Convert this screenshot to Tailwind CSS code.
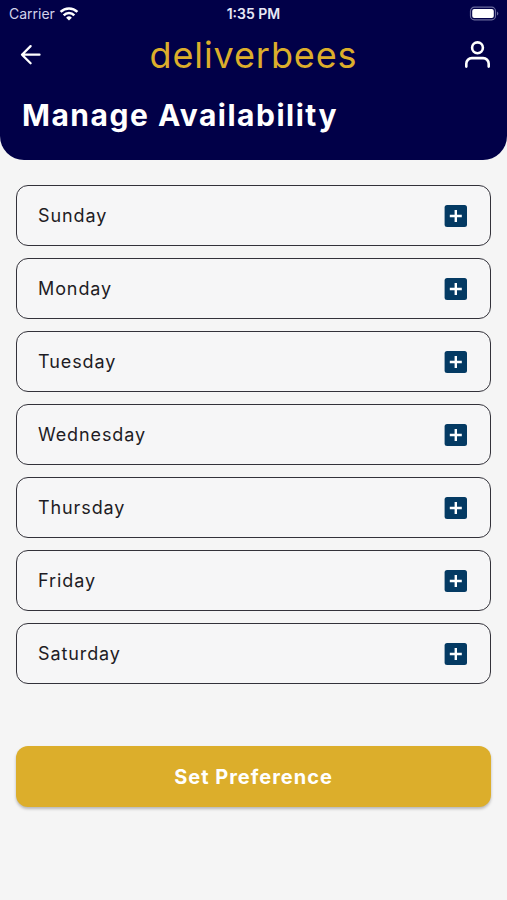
<!DOCTYPE html>
<html lang="en">
<head>
    <meta charset="UTF-8">
    <meta name="viewport" content="width=device-width, initial-scale=1.0">
    <title>Manage Availability - deliverbees</title>
    <script src="https://cdn.jsdelivr.net/npm/@tailwindcss/browser@4"></script>
</head>
<body class="min-h-screen bg-[#f5f5f5] font-['Inter',sans-serif] text-[#1e1c24]">

    <header class="bg-[#010048] rounded-b-3xl text-white pb-[27px]">
        <!-- Status bar -->
        <div class="grid grid-cols-3 items-center h-7 px-2 text-sm leading-7">
            <div class="flex items-center gap-1 pl-px text-[#d3d3ea]">
                <span>Carrier</span>
                <svg class="w-5 h-4" viewBox="0 0 20 16" fill="none" stroke="#fff" stroke-width="2.6">
                    <path d="M1.6 5.9a12 12 0 0 1 16.8 0"/>
                    <path d="M4.7 9.3a7.4 7.4 0 0 1 10.6 0"/>
                    <path d="M10 14.6l-2.9-2.9a4.1 4.1 0 0 1 5.8 0z" fill="#fff" stroke="none"/>
                </svg>
            </div>
            <span class="text-center font-semibold text-[#e8e8f6]">1:35 PM</span>
            <svg class="w-8 h-4 justify-self-end" viewBox="0 0 32 16">
                <rect x="3.5" y="1.2" width="25" height="12.6" rx="3.8" fill="none" stroke="#6a6a9c" stroke-width="1.2"/>
                <rect x="5.2" y="2.9" width="21.6" height="9.2" rx="2" fill="#fff"/>
                <path d="M30 5.4c1.8.8 1.8 3.4 0 4.2z" fill="#6a6a9c"/>
            </svg>
        </div>

        <!-- Nav row -->
        <div class="flex items-center justify-between px-4 h-[54px]">
            <a href="#" aria-label="Back">
                <svg class="w-7 h-7" viewBox="0 0 28 28" fill="none" stroke="#fff" stroke-width="2.3" stroke-linecap="round" stroke-linejoin="round">
                    <path d="M23.5 13.7H6M14.6 5.1L6 13.7l8.6 8.6"/>
                </svg>
            </a>
            <span class="text-4xl tracking-wide text-[#dcae2b]">deliverbees</span>
            <a href="#" aria-label="Profile">
                <svg class="w-7 h-7" viewBox="0 0 28 28" fill="none" stroke="#fff" stroke-width="2.6" stroke-linecap="round">
                    <circle cx="14.5" cy="6.8" r="5.4"/>
                    <path d="M3.3 25.6v-2.9a5.6 5.6 0 0 1 5.6-5.6h11.2a5.6 5.6 0 0 1 5.6 5.6v2.9"/>
                </svg>
            </a>
        </div>

        <h1 class="px-[22px] pt-[15px] text-3xl leading-9 font-bold tracking-wider">Manage Availability</h1>
    </header>

    <main class="px-4 pt-[25px]">
        <ul id="days" class="flex flex-col gap-3"></ul>

        <button type="button" class="w-full mt-[62px] min-h-[61px] rounded-xl bg-[#dcae2b] text-xl font-bold tracking-wider text-white shadow-[0_2px_3px_rgba(0,0,0,0.25)]">
            Set Preference
        </button>
    </main>

    <script>
        var days = ["Sunday", "Monday", "Tuesday", "Wednesday", "Thursday", "Friday", "Saturday"];
        document.getElementById("days").innerHTML = days.map(function (day) {
            return `
            <li class="flex items-center justify-between min-h-[61px] px-5 border border-[#33323a] rounded-xl bg-[#f6f6f7]">
                <span class="pl-px text-lg tracking-wider">${day}</span>
                <button type="button" aria-label="Add ${day}">
                    <svg class="w-7 h-7" viewBox="0 0 28 28">
                        <rect x="2.6" y="3" width="22.4" height="22" rx="2.5" fill="#043a63"/>
                        <path d="M13.8 8v12M7.8 14h12" stroke="#fff" stroke-width="2.4"/>
                    </svg>
                </button>
            </li>`;
        }).join("");
    </script>

</body>
</html>
